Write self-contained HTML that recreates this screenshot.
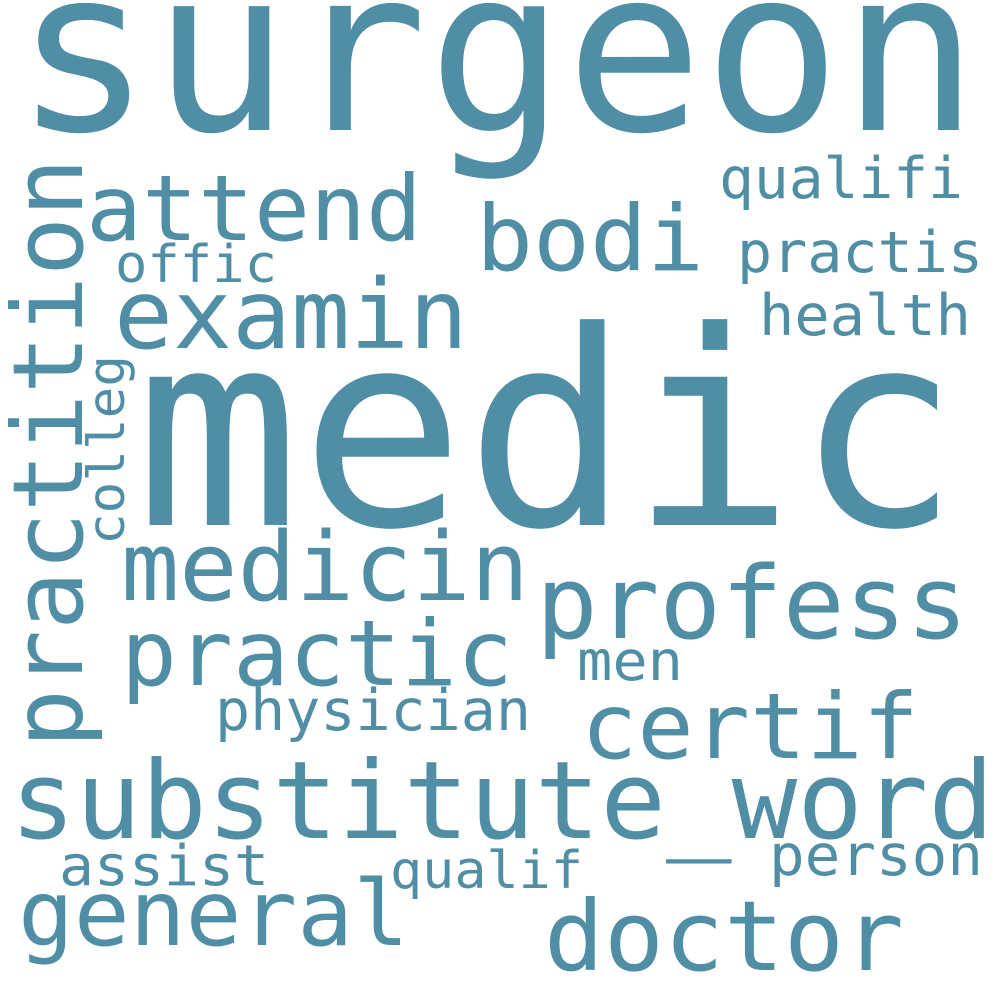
<!DOCTYPE html>
<html><head><meta charset="utf-8"><style>
html,body{margin:0;padding:0;background:#fff;width:1000px;height:1000px;overflow:hidden}
svg text{font-family:"DejaVu Sans Mono","Liberation Mono",monospace;fill:#4f8ea5}
</style></head><body>
<svg width="1000" height="1000" viewBox="0 0 1000 1000" xmlns="http://www.w3.org/2000/svg">
<text x="14" y="130" font-size="227" textLength="965" lengthAdjust="spacingAndGlyphs">surgeon</text>
<text x="135" y="525" font-size="271" textLength="825" lengthAdjust="spacingAndGlyphs">medic</text>
<text transform="translate(82,748) rotate(-90)" font-size="97" textLength="590" lengthAdjust="spacingAndGlyphs">practition</text>
<text transform="translate(124,545) rotate(-90)" font-size="51" textLength="190" lengthAdjust="spacingAndGlyphs">colleg</text>
<text x="86" y="240" font-size="91" textLength="336" lengthAdjust="spacingAndGlyphs">attend</text>
<text x="476" y="270" font-size="91" textLength="228" lengthAdjust="spacingAndGlyphs">bodi</text>
<text x="719" y="198" font-size="57" textLength="244" lengthAdjust="spacingAndGlyphs">qualifi</text>
<text x="737" y="272" font-size="57" textLength="246" lengthAdjust="spacingAndGlyphs">practis</text>
<text x="115" y="282" font-size="52" textLength="162" lengthAdjust="spacingAndGlyphs">offic</text>
<text x="114" y="348" font-size="96" textLength="354" lengthAdjust="spacingAndGlyphs">examin</text>
<text x="759" y="335" font-size="57" textLength="212" lengthAdjust="spacingAndGlyphs">health</text>
<text x="121" y="600" font-size="95" textLength="408" lengthAdjust="spacingAndGlyphs">medicin</text>
<text x="536" y="638" font-size="101" textLength="432" lengthAdjust="spacingAndGlyphs">profess</text>
<text x="121" y="685" font-size="91" textLength="392" lengthAdjust="spacingAndGlyphs">practic</text>
<text x="577" y="680" font-size="55" textLength="106" lengthAdjust="spacingAndGlyphs">men</text>
<text x="215" y="730" font-size="57" textLength="316" lengthAdjust="spacingAndGlyphs">physician</text>
<text x="581" y="758" font-size="91" textLength="338" lengthAdjust="spacingAndGlyphs">certif</text>
<text x="10" y="838" font-size="108" textLength="984" lengthAdjust="spacingAndGlyphs">substitute_word</text>
<text x="59" y="885" font-size="56" textLength="210" lengthAdjust="spacingAndGlyphs">assist</text>
<text x="390" y="888" font-size="52" textLength="193" lengthAdjust="spacingAndGlyphs">qualif</text>
<text x="769" y="875" font-size="57" textLength="214" lengthAdjust="spacingAndGlyphs">person</text>
<text x="18" y="945" font-size="91" textLength="391" lengthAdjust="spacingAndGlyphs">general</text>
<text x="544" y="970" font-size="97" textLength="360" lengthAdjust="spacingAndGlyphs">doctor</text>
</svg>
</body></html>
